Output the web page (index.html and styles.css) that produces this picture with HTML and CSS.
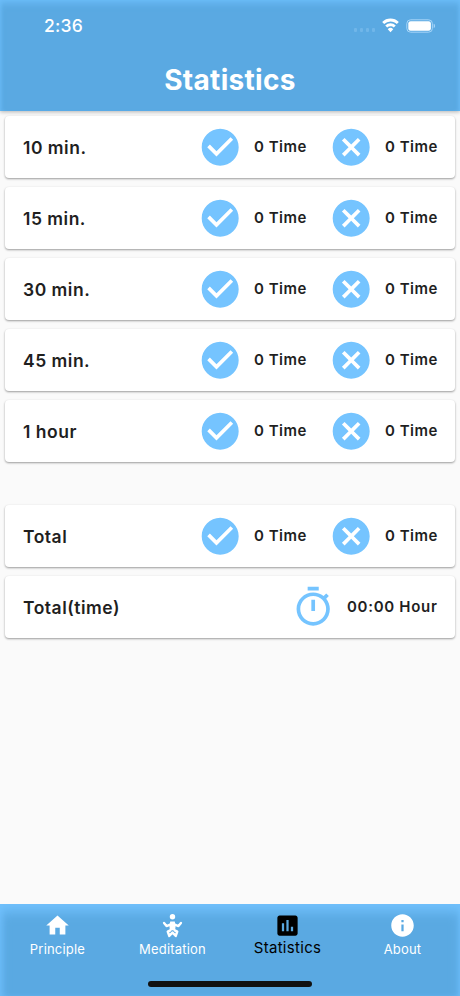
FILE: index.html
```html
<!DOCTYPE html>
<html lang="en">
<head>
<meta charset="utf-8">
<title>Statistics</title>
<link rel="stylesheet" href="styles.css">
</head>
<body>
<svg class="defs" aria-hidden="true">
  <symbol id="check" viewBox="0 0 24 24"><path d="M12 2C6.48 2 2 6.48 2 12s4.48 10 10 10 10-4.48 10-10S17.52 2 12 2zm-2 15-5-5 1.41-1.41L10 14.17l7.59-7.59L19 8l-9 9z"/></symbol>
  <symbol id="cross" viewBox="0 0 24 24"><path d="M12 2C6.47 2 2 6.47 2 12s4.47 10 10 10 10-4.47 10-10S17.53 2 12 2zm5 13.59L15.59 17 12 13.41 8.41 17 7 15.59 10.59 12 7 8.41 8.41 7 12 10.59 15.59 7 17 8.41 13.41 12 17 15.59z"/></symbol>
  <symbol id="timer" viewBox="0 0 24 24"><path d="M15 1H9v2h6V1zm-4 13h2V8h-2v6zm8.03-6.61 1.42-1.42c-.43-.51-.9-.99-1.41-1.41l-1.42 1.42C16.07 4.74 14.12 4 12 4c-4.97 0-9 4.03-9 9s4.02 9 9 9 9-4.03 9-9c0-2.12-.74-4.07-1.97-5.61zM12 20c-3.87 0-7-3.13-7-7s3.13-7 7-7 7 3.13 7 7-3.13 7-7 7z"/></symbol>
</svg>
<div class="screen">
  <header class="header">
    <div class="status">
      <span class="clock">2:36</span>
      <span class="signal"><i></i><i></i><i></i><i></i></span>
      <svg class="wifi" viewBox="0 0 18 14"><path d="M9 3.2c2.3 0 4.400.9 6 2.400l1.900-1.900a11.300 11.300 0 0 0-15.800 0L3 5.600a8.700 8.700 0 0 1 6-2.400z"/><path d="M9 7.600c1.200 0 2.300.5 3.100 1.200l1.900-1.900a7.300 7.300 0 0 0-10 0l1.900 1.900A4.600 4.600 0 0 1 9 7.600z"/><path d="M11.600 10.500a3.700 3.700 0 0 0-5.200 0L9 13.400z"/></svg>
      <svg class="battery" viewBox="0 0 30 14"><rect x=".8" y=".8" width="25.600" height="12.400" rx="3.800" fill="none" stroke="#a5d4f8" stroke-width="1"/><rect x="2.300" y="2.300" width="22.600" height="9.400" rx="2.300"/><path d="M27.700 4.800c1.800.5 1.800 3.900 0 4.400z" fill="#a5d4f8"/></svg>
    </div>
    <h1 class="title">Statistics</h1>
  </header>
  <main class="list">
    <section class="card"><h2>10 min.</h2><svg class="icon"><use href="#check"/></svg><span class="count">0 Time</span><svg class="icon"><use href="#cross"/></svg><span class="count last">0 Time</span></section>
    <section class="card"><h2>15 min.</h2><svg class="icon"><use href="#check"/></svg><span class="count">0 Time</span><svg class="icon"><use href="#cross"/></svg><span class="count last">0 Time</span></section>
    <section class="card"><h2>30 min.</h2><svg class="icon"><use href="#check"/></svg><span class="count">0 Time</span><svg class="icon"><use href="#cross"/></svg><span class="count last">0 Time</span></section>
    <section class="card"><h2>45 min.</h2><svg class="icon"><use href="#check"/></svg><span class="count">0 Time</span><svg class="icon"><use href="#cross"/></svg><span class="count last">0 Time</span></section>
    <section class="card"><h2>1 hour</h2><svg class="icon"><use href="#check"/></svg><span class="count">0 Time</span><svg class="icon"><use href="#cross"/></svg><span class="count last">0 Time</span></section>
    <section class="card total"><h2>Total</h2><svg class="icon"><use href="#check"/></svg><span class="count">0 Time</span><svg class="icon"><use href="#cross"/></svg><span class="count last">0 Time</span></section>
    <section class="card"><h2>Total(time)</h2><svg class="icon"><use href="#timer"/></svg><span class="count hours">00:00 Hour</span></section>
  </main>
  <footer class="footer">
    <nav class="tabs">
      <a class="tab"><svg viewBox="0 0 24 24"><path d="M10 20v-6h4v6h5v-8h3L12 3 2 12h3v8z"/></svg><span>Principle</span></a>
      <a class="tab"><svg viewBox="0 0 24 24"><circle cx="12" cy="4.200" r="2.400"/><path d="M4.500 9.800l2.200 2.700L10.500 11h3l3.800 1.500 2.200-2.700" fill="none" stroke="#fff" stroke-width="2.100" stroke-linecap="round" stroke-linejoin="round"/><path d="M10 8.400h4l.8 3.600-.5 4.200H9.700L9.200 12z"/><path d="M10 16.300l-2.200 1.200 1.400 3.800M14 16.300l2.200 1.200-1.400 3.800M9.500 20.800l2.500-2.500 2.500 2.500" fill="none" stroke="#fff" stroke-width="2.200" stroke-linecap="round" stroke-linejoin="round"/></svg><span>Meditation</span></a>
      <a class="tab active"><svg viewBox="0 0 24 24"><path d="M19 3H5c-1.100 0-2 .9-2 2v14c0 1.100.9 2 2 2h14c1.100 0 2-.9 2-2V5c0-1.100-.9-2-2-2zM9 17H7v-7h2v7zm4 0h-2V7h2v10zm4 0h-2v-4h2v4z"/></svg><span>Statistics</span></a>
      <a class="tab"><svg viewBox="0 0 24 24"><path d="M12 2C6.480 2 2 6.480 2 12s4.480 10 10 10 10-4.480 10-10S17.520 2 12 2zm1 15h-2v-6h2v6zm0-8h-2V7h2v2z"/></svg><span>About</span></a>
    </nav>
    <div class="home-bar"></div>
  </footer>
</div>
</body>
</html>
```
FILE: styles.css
```css
* { box-sizing: border-box; }

body {
  margin: 0;
  font-family: Inter, "Liberation Sans", sans-serif;
  color: #1f1f1f;
}

.defs { display: none; }

.screen {
  display: flex;
  flex-direction: column;
  width: 460px;
  height: 996px;
  overflow: hidden;
  background: #fafafa;
}

.header {
  flex: none;
  height: 111px;
  color: #fff;
  background: #5aa9e2;
  box-shadow: inset 0 5px 7px -2px #6cbdf9, inset 3px 0 5px -3px #6cbdf9, inset -3px 0 5px -3px #6cbdf9, 0 1px 4px rgba(0, 0, 0, .28);
}

.status {
  display: flex;
  align-items: center;
  height: 51px;
  padding: 0 24px 0 44px;
}

.clock {
  flex: 1;
  font-size: 17.500px;
  font-weight: 500;
  letter-spacing: .2px;
}

.signal { display: flex; gap: 3px; margin: 9px 6px 0 0; }
.signal i { width: 3px; height: 4px; border-radius: 1px; background: #70b6e9; }
.wifi { width: 19px; height: 15px; fill: #fff; margin-right: 6px; }
.battery { width: 30px; height: 14px; fill: #fff; }

.title {
  margin: 11px 0 0;
  font-size: 28px;
  line-height: 36px;
  font-weight: 700;
  letter-spacing: .3px;
  text-align: center;
}

.list {
  flex: 1;
  display: flex;
  flex-direction: column;
  gap: 9px;
  padding: 5px 5px 0;
}

.card {
  display: flex;
  align-items: center;
  height: 62px;
  padding: 0 0 0 18px;
  border-radius: 4px;
  background: #fff;
  box-shadow: 0 1px 2px rgba(0, 0, 0, .3), 0 1px 3px rgba(0, 0, 0, .1);
}

.total { margin-top: 34px; }

.card h2 {
  flex: 1;
  margin: 0;
  font-size: 17.500px;
  font-weight: 600;
  letter-spacing: .5px;
}

.icon { width: 44.400px; height: 44.400px; fill: #75c4ff; }

.count {
  width: 74.600px;
  margin: -1px 0 0 12px;
  font-size: 15px;
  font-weight: 600;
  letter-spacing: .5px;
  white-space: nowrap;
}

.last { width: 70px; }
.hours { width: 108px; letter-spacing: .7px; }

.footer {
  flex: none;
  height: 92px;
  background: #5aa9e2;
  box-shadow: inset 0 9px 12px -1px #70c0fc, inset 4px 0 7px -3px #6cbdf9, inset -3px 0 5px -3px #6cbdf9;
}

.tabs { display: flex; height: 80px; }

.tab {
  flex: 1;
  display: flex;
  flex-direction: column;
  align-items: center;
  padding-top: 8px;
  font-size: 13px;
  line-height: 18px;
  letter-spacing: .2px;
  color: #fff;
  fill: #fff;
}

.tab svg { width: 27px; height: 27px; }
.tab.active { color: #000; fill: #000; font-size: 15px; letter-spacing: .3px; }
.tab span { margin-top: 1px; }
.tab.active span { margin-top: 0; }

.home-bar {
  width: 164px;
  height: 6px;
  margin: -3px auto 0;
  border-radius: 3px;
  background: #111;
}
```
